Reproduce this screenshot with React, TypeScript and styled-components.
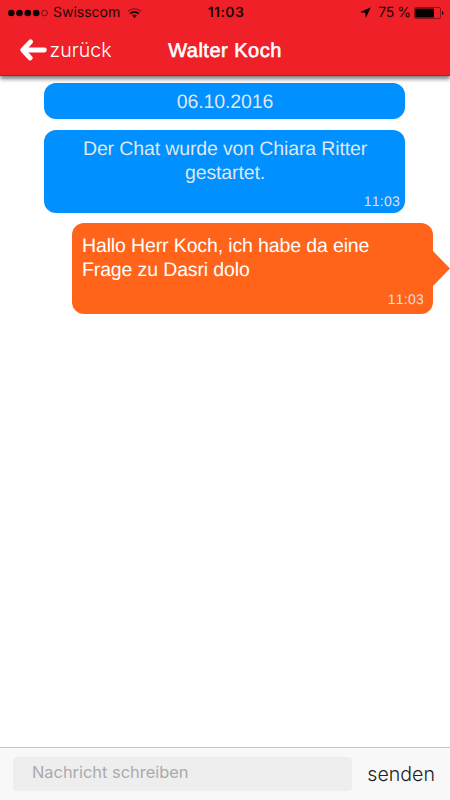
import React from "react";
import styled, { createGlobalStyle } from "styled-components";

const Global = createGlobalStyle`
  * { box-sizing: border-box; }
  html, body { margin: 0; padding: 0; background: #fff; }
  button, input { font: inherit; border: 0; margin: 0; background: none; }
`;

const helvetica = `"Liberation Sans", Arial, sans-serif`;
const system = `Inter, Roboto, sans-serif`;

const Screen = styled.div`
  width: 450px;
  height: 800px;
  display: flex;
  flex-direction: column;
  overflow: hidden;
  background: #fff;
  font-family: ${helvetica};
  text-rendering: geometricPrecision;
`;

const Header = styled.header`
  flex: none;
  height: 76px;
  background: #f02028;
  border-bottom: 1px solid #f2000a;
  box-shadow: 0 3px 4px 0 rgba(0, 0, 0, 0.5);
  position: relative;
`;

const StatusBar = styled.div`
  height: 25px;
  padding: 0 6px 0 8px;
  display: grid;
  grid-template-columns: 1fr auto 1fr;
  align-items: center;
  font-family: ${system};
  font-size: 14px;
  line-height: 25px;
  color: #1c0506;
`;

const StatusGroup = styled.div<{ $end?: boolean }>`
  display: flex;
  align-items: center;
  justify-content: ${(p) => (p.$end ? "flex-end" : "flex-start")};
`;

const Carrier = styled.span`
  margin: 0 7px 0 5px;
  font-size: 14px;
`;

const Clock = styled.span`
  font-size: 14px;
  font-weight: 600;
  letter-spacing: 0.4px;
`;

const Percent = styled.span`
  margin: 0 3.5px 0 7px;
  font-size: 14px;
  letter-spacing: -0.45px;
  white-space: nowrap;
`;

const NavBar = styled.nav`
  height: 50px;
  padding: 0 20px;
  display: grid;
  grid-template-columns: 1fr auto 1fr;
  align-items: center;
  color: #fff;
`;

const BackButton = styled.button`
  display: flex;
  align-items: center;
  gap: 2.5px;
  padding: 0;
  color: #fff;
  font-family: ${system};
  font-size: 19.6px;
  font-weight: 300;
  line-height: 24px;
`;

const Title = styled.h1`
  margin: 1px 0 0;
  font-size: 20px;
  font-weight: 400;
  line-height: 24px;
  letter-spacing: 0.5px;
  -webkit-text-stroke: 0.6px #fff;
`;

const Messages = styled.main`
  flex: 1;
  display: flex;
  flex-direction: column;
  align-items: flex-start;
  padding-top: 7px;
`;

const Notice = styled.div<{ $height: number; $gap: number }>`
  width: 361px;
  height: ${(p) => p.$height}px;
  margin: 0 0 ${(p) => p.$gap}px 44px;
  padding: 7px 5px 4px 6px;
  display: flex;
  flex-direction: column;
  justify-content: space-between;
  border-radius: 12px;
  background: #0090ff;
  color: #dfe6f0;
  text-align: center;
`;

const Text = styled.p`
  margin: 0;
  font-size: 19.5px;
  line-height: 24px;
  letter-spacing: -0.13px;
`;

const Time = styled.time`
  align-self: flex-end;
  font-size: 14px;
  line-height: 16px;
  letter-spacing: 0.25px;
  font-kerning: none;
  color: #e6dfe0;
`;

const OwnMessage = styled.div`
  position: relative;
  width: 361px;
  height: 91px;
  margin-left: 72px;
  padding: 11px 9px 7px 10px;
  display: flex;
  flex-direction: column;
  justify-content: space-between;
  border-radius: 12px;
  background: #ff641a;
  color: #fff;
`;

const Tail = styled.svg`
  position: absolute;
  left: 100%;
  top: 28px;
  display: block;
`;

const Composer = styled.footer`
  flex: none;
  height: 53px;
  padding: 0 15px 0 13px;
  display: flex;
  align-items: center;
  justify-content: space-between;
  border-top: 1px solid #c6c6c6;
  background: #f8f8f8;
  font-family: ${system};
`;

const Input = styled.input`
  width: 339px;
  height: 34px;
  padding: 0 19px 4px;
  border-radius: 4px;
  background: #eee;
  color: #333;
  font-size: 16.4px;
  font-weight: 400;
  outline: none;
  &::placeholder { color: #aaa; opacity: 1; }
`;

const SendButton = styled.button`
  padding: 0;
  color: #222;
  font-size: 19.6px;
  font-weight: 300;
  line-height: 26px;
`;

const Signal = () => (
  <svg width="40" height="10" viewBox="0 0 40 10">
    {[3.2, 11.5, 19.8, 28.2].map((x) => (
      <circle key={x} cx={x} cy="5" r="3.3" fill="#0d0203" />
    ))}
    <circle cx="36.5" cy="5" r="2.9" fill="none" stroke="#3a080a" strokeWidth="0.7" />
  </svg>
);

const Wifi = () => (
  <svg width="15" height="12" viewBox="0 0 16 12" fill="none">
    <path d="M1 4.2Q8 -1.2 15 4.2" stroke="#96151a" strokeWidth="1.7" />
    <path d="M3.3 6.7Q8 3 12.7 6.7" stroke="#0d0203" strokeWidth="1.8" />
    <path d="M5.4 8.6Q8 6.6 10.6 8.6L8 11.4Z" fill="#0d0203" />
  </svg>
);

const Location = () => (
  <svg width="11" height="11" viewBox="0 0 11 11">
    <path d="M10.8 0.2L0 5.3L5.2 5.8L5.8 11Z" fill="#0d0203" />
  </svg>
);

const Battery = () => (
  <svg width="30" height="12" viewBox="0 0 30 12">
    <rect x="0.5" y="0.5" width="26" height="11" rx="1.2" fill="none" stroke="#8c1217" />
    <rect x="1.3" y="1.5" width="18.7" height="9" fill="#080102" />
    <path d="M28 4Q29.5 4.3 29.5 6Q29.5 7.7 28 8Z" fill="#080102" />
  </svg>
);

const BackArrow = () => (
  <svg width="27" height="22" viewBox="0 0 27 22" fill="none" stroke="#fff" strokeWidth="4.8" strokeLinecap="round" strokeLinejoin="round">
    <path d="M10.5 2.8L2.8 11L10.2 19M3 11H24.4" />
  </svg>
);

export default function App() {
  return (
    <>
      <Global />
      <Screen>
        <Header>
          <StatusBar>
            <StatusGroup>
              <Signal />
              <Carrier>Swisscom</Carrier>
              <Wifi />
            </StatusGroup>
            <Clock>11:03</Clock>
            <StatusGroup $end>
              <Location />
              <Percent>75 %</Percent>
              <Battery />
            </StatusGroup>
          </StatusBar>
          <NavBar>
            <BackButton type="button">
              <BackArrow />
              zurück
            </BackButton>
            <Title>Walter Koch</Title>
          </NavBar>
        </Header>
        <Messages>
          <Notice $height={35.5} $gap={11}>
            <Text>06.10.2016</Text>
          </Notice>
          <Notice $height={83.5} $gap={10}>
            <Text>
              Der Chat wurde von Chiara Ritter
              <br />
              gestartet.
            </Text>
            <Time>11:03</Time>
          </Notice>
          <OwnMessage>
            <Text>
              Hallo Herr Koch, ich habe da eine
              <br />
              Frage zu Dasri dolo
            </Text>
            <Time>11:03</Time>
            <Tail width="17" height="36" viewBox="0 0 17 36">
              <path d="M-1 -1L17 17.5L-1 36Z" fill="#ff641a" />
            </Tail>
          </OwnMessage>
        </Messages>
        <Composer>
          <Input placeholder="Nachricht schreiben" />
          <SendButton type="button">senden</SendButton>
        </Composer>
      </Screen>
    </>
  );
}
